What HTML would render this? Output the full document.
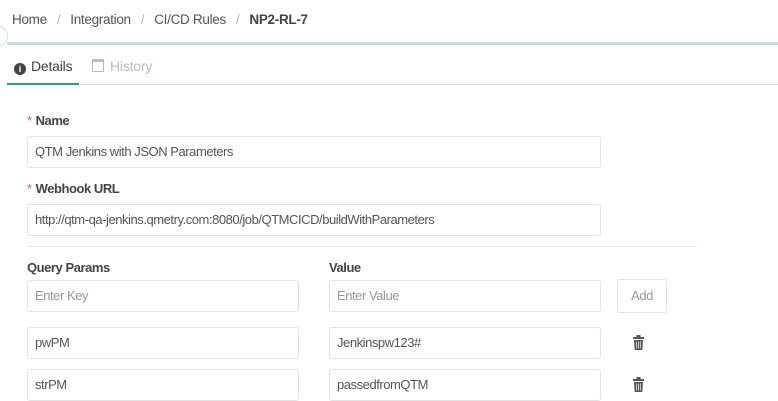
<!DOCTYPE html>
<html><head><meta charset="utf-8"><style>
*{box-sizing:border-box;margin:0;padding:0}
body{width:778px;height:401px;overflow:hidden;background:#fff;font-family:"Liberation Sans",sans-serif;color:#333;position:relative;font-size:13px;letter-spacing:-0.45px}
.a{position:absolute}
.crumb{top:12px;left:12px;font-size:13.5px;color:#555;white-space:nowrap;letter-spacing:-0.3px}
.crumb .s{color:#bbb;margin:0 10px}
.crumb b{color:#444}
.inp{position:absolute;border:1px solid #e3e3e3;border-radius:3px;height:32px;line-height:30px;padding-left:7px;color:#555;white-space:nowrap;overflow:hidden}
.ph{color:#999}
.lbl{position:absolute;font-weight:bold;color:#444;font-size:13px}
.req{color:#e0566e;margin-right:4px;font-weight:normal}
</style></head><body>
<div class="a crumb">Home<span class="s">/</span>Integration<span class="s">/</span>CI/CD Rules<span class="s">/</span><b>NP2-RL-7</b></div>
<div class="a" style="left:-12px;top:26px;width:20px;height:20px;border:1px solid #ddd;border-radius:50%;background:#fff"></div>
<div class="a" style="left:7px;top:42px;width:771px;height:3px;background:#c6dde8"></div>
<div class="a" style="left:14px;top:58px;font-size:14px;color:#444;letter-spacing:-0.2px"><span style="display:inline-block;width:12px;height:12px;border-radius:50%;background:#444;color:#fff;font-size:9px;line-height:12px;text-align:center;font-weight:bold;vertical-align:-1px;margin-right:5px;letter-spacing:0">i</span>Details</div>
<div class="a" style="left:92px;top:58px;font-size:14px;color:#b5bec6;letter-spacing:-0.2px"><span style="display:inline-block;width:12px;height:13px;border:1.5px solid #b5bec6;border-top-width:3px;vertical-align:-1px;margin-right:6px"></span>History</div>
<div class="a" style="left:7px;top:84px;width:771px;height:1px;background:#ddd"></div>
<div class="a" style="left:7px;top:83px;width:72px;height:2px;background:#26a77e"></div>
<div class="lbl" style="left:27px;top:113px"><span class="req">*</span>Name</div>
<div class="inp" style="left:27px;top:136px;width:574px">QTM Jenkins with JSON Parameters</div>
<div class="lbl" style="left:27px;top:181px"><span class="req">*</span>Webhook URL</div>
<div class="inp" style="left:27px;top:204px;width:574px">http://qtm-qa-jenkins.qmetry.com:8080/job/QTMCICD/buildWithParameters</div>
<div class="a" style="left:28px;top:246px;width:669px;height:1px;background:#e6e6e6"></div>
<div class="lbl" style="left:27px;top:260px">Query Params</div>
<div class="lbl" style="left:329px;top:260px">Value</div>
<div class="inp ph" style="left:27px;top:280px;width:272px">Enter Key</div>
<div class="inp ph" style="left:329px;top:280px;width:272px">Enter Value</div>
<div class="inp ph" style="left:617px;top:279px;width:50px;height:34px;line-height:32px;padding:0;text-align:center">Add</div>
<div class="inp" style="left:27px;top:327px;width:272px">pwPM</div>
<div class="inp" style="left:329px;top:327px;width:272px">Jenkinspw123#</div>
<div class="inp" style="left:27px;top:369px;width:272px">strPM</div>
<div class="inp" style="left:329px;top:369px;width:272px">passedfromQTM</div>
<svg class="a" style="left:633px;top:335px" width="11" height="15" viewBox="0 0 11 15"><rect x="3.5" y="0" width="4" height="2" fill="#555"/><rect x="0" y="2" width="11" height="2" fill="#555"/><path d="M1 5h9l-0.7 10h-7.6z" fill="#555"/><path d="M3.7 6.5v7M5.5 6.5v7M7.3 6.5v7" stroke="#fff" stroke-width="0.7"/></svg>
<svg class="a" style="left:633px;top:377px" width="11" height="15" viewBox="0 0 11 15"><rect x="3.5" y="0" width="4" height="2" fill="#555"/><rect x="0" y="2" width="11" height="2" fill="#555"/><path d="M1 5h9l-0.7 10h-7.6z" fill="#555"/><path d="M3.7 6.5v7M5.5 6.5v7M7.3 6.5v7" stroke="#fff" stroke-width="0.7"/></svg>
</body></html>
